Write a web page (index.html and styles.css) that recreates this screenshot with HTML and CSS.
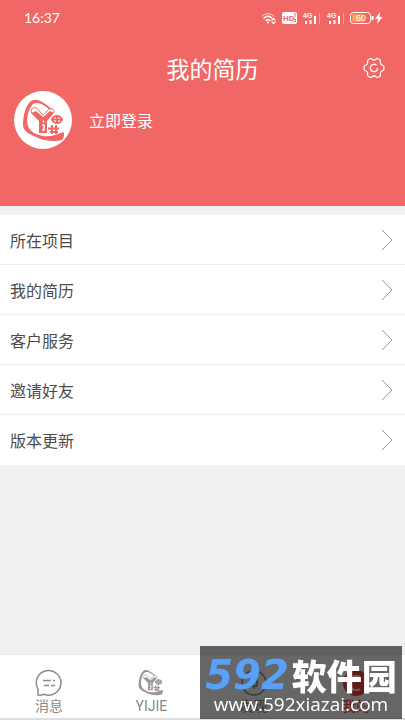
FILE: index.html
```html
<!DOCTYPE html>
<html lang="zh-CN">
<head>
<meta charset="utf-8">
<meta name="viewport" content="width=device-width, initial-scale=1">
<title>我的简历</title>
<link rel="stylesheet" href="styles.css">
</head>
<body>
<svg class="defs" aria-hidden="true">
  <symbol id="logo" viewBox="0 0 58 58">
    <path fill="currentColor" fill-rule="evenodd" d="M16 11C19 8 24 8 28 11C32 13 36 16 38 19L35 18C30 14 24 10 19 13C14 18 12 29 14 35C16 41 23 44 29 45C36 46 42 44 49 41C51 43 50 47 48 49C41 51 29 50 22 46C14 43 9 39 9 34C9 26 11 16 16 11Z"/>
    <path fill="none" stroke="currentColor" stroke-width="1" d="M17.500 22a3.600 3.600 0 0 1 5.500-4.500L29 24l6.500-6.500A3.600 3.600 0 0 1 40 22"/>
    <path fill="currentColor" d="M17 22l5-2 7 6 7-6 4 2-7 8v12h-8V30z"/>
    <path fill="none" stroke="#fff" stroke-width="1.500" d="M29.500 29.500v2M28 34h2v5h-2"/>
    <ellipse cx="43" cy="28.500" rx="4.500" ry="3.500" fill="none" stroke="currentColor" stroke-width="2"/>
    <path fill="none" stroke="currentColor" stroke-width="2" d="M43 24v9M37 28.500h12M38 34v9M42 34v9M34 37.500h11M36 41h8"/>
  </symbol>
</svg>
<header class="hero">
  <div class="status">
    <time>16:37</time>
    <svg class="status-icons" width="124" height="16" viewBox="0 0 124 16" aria-hidden="true">
      <g fill="none" stroke="#fff" stroke-linecap="round">
        <path stroke-width="1" opacity=".65" d="M1 6Q7 1 13 6"/>
        <path stroke-width="1.500" d="M3 8Q7 4.500 11 8M5 10.500Q7 9 9 10.500"/>
        <path stroke-width="1.200" d="M11 10l1.500-1.500L14 10M11 12l1.500 1.500L14 12"/>
      </g>
      <circle cx="7" cy="12.500" r="1" fill="#fff"/>
      <rect x="21" y="2" width="15" height="12" rx="2" fill="#fff"/>
      <text class="hd" x="22" y="11">HD</text>
      <path d="M33 4l1-.5V7M32.500 9h2v2.500h-2" fill="none" stroke="#f16765"/>
      <g id="signal">
        <text class="net" x="42" y="8">4G</text>
        <path stroke="#fff" stroke-width="2" d="M45 11v3M49.500 10v4M54 6v8"/>
        <path stroke="#fff" opacity=".35" d="M58.500 3v11"/>
      </g>
      <use href="#signal" x="24"/>
      <rect x="89.500" y="2.500" width="20" height="11" rx="3" fill="none" stroke="#fff"/>
      <rect x="91" y="4" width="12" height="8" rx="2" fill="#fa9f58"/>
      <path d="M111.500 6v4" stroke="#fff" stroke-width="2"/>
      <text class="charge" x="95" y="11">60</text>
      <path d="M119 2l-5 7h3l-1 5 5.500-7h-3z" fill="#fff"/>
    </svg>
  </div>
  <div class="titlebar">
    <h1>我的简历</h1>
    <button class="settings" aria-label="设置">
      <svg width="22" height="22" viewBox="0 0 22 22" fill="none" stroke="#fff" stroke-width="1.300" stroke-linejoin="round">
        <path d="M7.500 1.500C9 1.500 9 3 11 3s2-1.500 3.500-1.500C16 2 17 2.700 17.500 3.500c0 1.500-.7 2 .3 3.500 1 1.500 2.200 1 2.900 2 .4 1.500.4 2.500 0 4-.7 1-1.900.5-2.900 2-1 1.500-.3 2-.3 3.500-.5.800-1.500 1.500-3 2C13 20.500 13 19 11 19s-2 1.500-3.500 1.500c-1.500-.5-2.500-1.200-3-2 0-1.500.7-2-.3-3.500-1-1.500-2.200-1-2.900-2-.4-1.500-.4-2.500 0-4 .7-1 1.900-.5 2.900-2 1-1.500.3-2 .3-3.500.5-.8 1.500-1.500 3-2z"/>
        <path d="M13.500 8.200A3.700 3.700 0 1 0 14.700 11"/>
      </svg>
    </button>
  </div>
  <a class="profile" href="#login">
    <span class="avatar"><svg width="58" height="58"><use href="#logo"/></svg></span>
    <span>立即登录</span>
  </a>
</header>
<main>
  <nav class="menu" aria-label="菜单">
    <a href="#project">所在项目<svg class="arrow" viewBox="0 0 12 22"><path d="M1 1l10 10L1 21"/></svg></a>
    <a href="#resume">我的简历<svg class="arrow" viewBox="0 0 12 22"><path d="M1 1l10 10L1 21"/></svg></a>
    <a href="#service">客户服务<svg class="arrow" viewBox="0 0 12 22"><path d="M1 1l10 10L1 21"/></svg></a>
    <a href="#invite">邀请好友<svg class="arrow" viewBox="0 0 12 22"><path d="M1 1l10 10L1 21"/></svg></a>
    <a href="#version">版本更新<svg class="arrow" viewBox="0 0 12 22"><path d="M1 1l10 10L1 21"/></svg></a>
  </nav>
</main>
<nav class="tabs" aria-label="主导航">
  <a href="#messages">
    <svg width="28" height="28" viewBox="0 0 28 28" fill="none" stroke="#8c8c8c" stroke-width="1.500">
      <path d="M3 26V20A12.300 12.300 0 1 1 9 25.200Q6 26.500 3 26z"/>
      <path d="M8 11.500h8M18 11.500h2M9 16.500h5M16 16.500h4"/>
    </svg>
    <span>消息</span>
  </a>
  <a href="#yijie">
    <svg width="26" height="28" viewBox="8 7 44 46" preserveAspectRatio="none"><use href="#logo" width="58" height="58"/></svg>
    <span>YIJIE</span>
  </a>
  <a href="#find">
    <svg width="28" height="28" viewBox="0 0 28 28" fill="none" stroke="#8c8c8c" stroke-width="1.500">
      <circle cx="14" cy="14" r="12"/><path d="M11 10h6v7h-6zM14 8v12M10 13h8"/>
    </svg>
    <span>发现</span>
  </a>
  <a class="active" href="#me" aria-current="page">
    <svg width="28" height="28" viewBox="0 0 28 28">
      <circle cx="14" cy="14" r="13" fill="#f04343"/><path d="M18 8a7 7 0 1 0 0 12" fill="none" stroke="#fff" stroke-width="2"/>
    </svg>
    <span>我的</span>
  </a>
</nav>
<aside class="watermark">
  <p class="brand"><span class="number">592</span><span class="name">软件园</span></p>
  <p class="site">www.592xiazai.com</p>
</aside>
</body>
</html>
```
FILE: styles.css
```css
* { box-sizing: border-box; }
body {
  margin: 0;
  min-height: 100vh;
  display: flex;
  flex-direction: column;
  background: #f0f0f0;
  color: #4c4c4c;
  font: 16px/24px "Noto Sans CJK SC", sans-serif;
}
a { color: inherit; text-decoration: none; }
h1, p { margin: 0; }
.defs { position: absolute; width: 0; height: 0; }
.hero { background: #f16765; color: #fff; padding-bottom: 57px; }
.status {
  display: flex;
  justify-content: space-between;
  align-items: center;
  height: 36px;
  padding: 0 20px 0 24px;
  font: 14px/20px Lato, sans-serif;
}
.hd { font: bold 8px "Liberation Sans", sans-serif; fill: #f16765; }
.net { font: bold 7px "Liberation Sans", sans-serif; fill: #fff; }
.charge { font: 9px "Liberation Sans", sans-serif; fill: #fff; }
.titlebar {
  display: grid;
  grid-template-columns: 1fr auto 1fr;
  align-items: center;
  height: 55px;
  padding: 8px 20px 0 40px;
}
h1 { grid-column: 2; font-size: 23px; line-height: 32px; font-weight: 400; }
.settings {
  justify-self: end;
  display: flex;
  padding: 0;
  border: 0;
  background: none;
}
.profile { display: flex; align-items: center; gap: 17px; padding-left: 14px; }
.avatar { width: 58px; height: 58px; border-radius: 50%; background: #fff; color: #f16765; }
.avatar svg { display: block; }
main { flex: 1; padding-top: 9px; }
.menu a {
  display: flex;
  justify-content: space-between;
  align-items: center;
  height: 50px;
  padding: 0 12px 0 10px;
  background: #fff;
  border-bottom: 1px solid #ececec;
}
.menu a:last-child { border-bottom: 0; }
.arrow { width: 12px; height: 22px; fill: none; stroke: #999; }
.tabs {
  display: flex;
  justify-content: space-between;
  height: 66px;
  padding: 14px 22px 0;
  background: #fff;
  border-top: 1px solid #e8e8e8;
  border-bottom: 2px solid #dedede;
  color: #888;
  font: 14px/18px Roboto, "Noto Sans CJK SC", sans-serif;
}
.tabs a { width: 54px; display: flex; flex-direction: column; align-items: center; }
.tabs svg { color: #999; }
.tabs .active { color: #f04343; }
.watermark {
  position: fixed;
  right: 3px;
  bottom: 1px;
  width: 202px;
  height: 73px;
  padding-top: 12px;
  background: rgba(0, 0, 0, .6);
  color: #fff;
  white-space: nowrap;
}
.brand {
  display: flex;
  align-items: center;
  justify-content: center;
  gap: 3px;
  height: 34px;
  line-height: 34px;
}
.number { color: #58a0f8; font: italic bold 40px/34px "DejaVu Sans", sans-serif; }
.name { font-size: 35px; font-weight: 900; }
.site { text-align: center; font: 500 19px/24px "Open Sans", sans-serif; }
```
